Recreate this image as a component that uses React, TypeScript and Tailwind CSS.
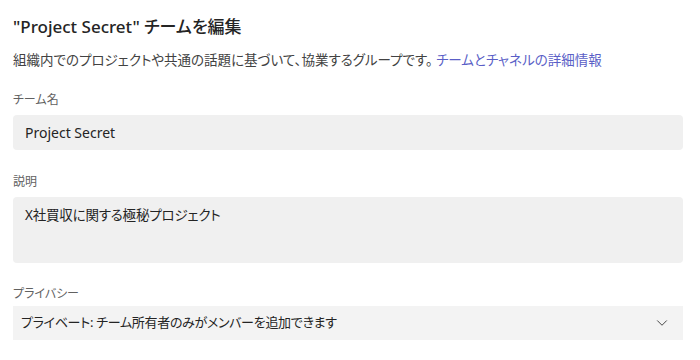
import { ChevronDown } from "lucide-react";

const font = { fontFamily: '"Noto Sans", "Noto Sans CJK JP", sans-serif' };

export default function App() {
  return (
    <div
      className="h-[360px] w-[700px] overflow-hidden bg-white px-[13px] text-[#242424] [font-feature-settings:'palt']"
      style={font}
    >
      <h1 className="pt-[14px] text-[17px] font-medium leading-[26px]">"Project Secret" チームを編集</h1>
      <p className="mt-[10px] text-[13.5px] leading-[20px] text-[#424242]">
        組織内でのプロジェクトや共通の話題に基づいて、協業するグループです。{" "}
        <span className="text-[#5b5fc7]">チームとチャネルの詳細情報</span>
      </p>

      <label className="mt-[22px] block text-[12px] leading-[16px] text-[#616161]">チーム名</label>
      <div className="mt-[7px] mr-[4px] flex h-[35px] items-center rounded-[4px] bg-[#f0f0f0] px-[12px] text-[14px]">
        Project Secret
      </div>

      <label className="mt-[24px] block text-[12px] leading-[16px] text-[#616161]">説明</label>
      <div className="mt-[7px] mr-[4px] h-[66px] rounded-[4px] bg-[#f0f0f0] px-[12px] pt-[8px] text-[13.5px] leading-[20px] tracking-[-0.2px]">
        X社買収に関する極秘プロジェクト
      </div>

      <label className="mt-[23px] block text-[12px] leading-[16px] text-[#616161]">プライバシー</label>
      <div className="mt-[4px] mr-[4px] flex h-[34px] items-center justify-between bg-[#f3f3f3] pl-[8px] pr-[12px] text-[13px] tracking-[-0.3px]">
        <span>プライベート: チーム所有者のみがメンバーを追加できます</span>
        <ChevronDown className="h-[18px] w-[18px] text-[#424242]" strokeWidth={1.3} />
      </div>
    </div>
  );
}
